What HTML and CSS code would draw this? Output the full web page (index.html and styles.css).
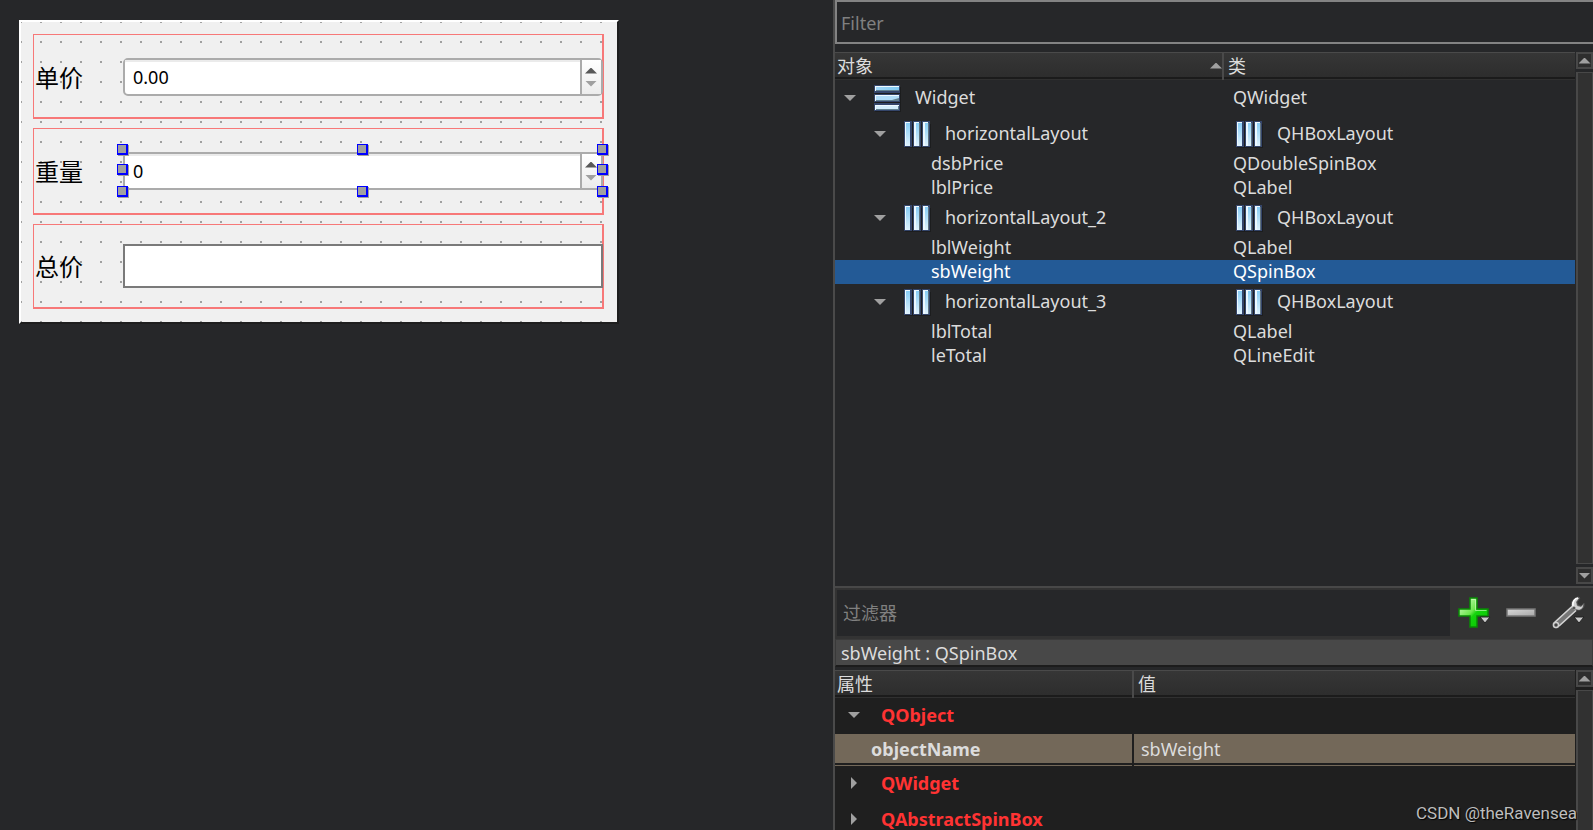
FILE: index.html
```html
<!DOCTYPE html>
<html lang="zh-CN">
<head>
<meta charset="utf-8">
<title>Widget</title>
<link rel="stylesheet" href="styles.css">
</head>
<body>
<svg class="defs" aria-hidden="true">
  <defs>
    <linearGradient id="barV" x1="0" y1="0" x2="0" y2="1"><stop offset="0" stop-color="#84ccf6"/><stop offset="1" stop-color="#dff2fd"/></linearGradient>
    <linearGradient id="barA" x1="0" y1="0" x2="1" y2="0"><stop offset="0" stop-color="#a4d8f8"/><stop offset="1" stop-color="#80caf2"/></linearGradient>
    <linearGradient id="green" x1="0" y1="0" x2="1" y2="1"><stop offset="0" stop-color="#e4ffd8"/><stop offset=".45" stop-color="#6ee84e"/><stop offset=".55" stop-color="#14d40c"/><stop offset="1" stop-color="#06c400"/></linearGradient>
    <linearGradient id="grey" x1="0" y1="0" x2="1" y2="1"><stop offset="0" stop-color="#d8d8d8"/><stop offset="1" stop-color="#a8a8a8"/></linearGradient>
    <symbol id="hbox" viewBox="0 0 28 28">
      <path d="M1 3h26v24H1z" fill="#000" opacity=".25"/>
      <path d="M0 0h8v26H0zM9 0h8v26H9zM18 0h8v26h-8z" fill="#34456a"/>
      <path d="M5 2h1v23H5zM14 2h2v23h-2zM23 2h2v23h-2z" fill="#61737f"/>
      <path d="M1 1h5v24H1zM10 1h5v24h-5zM19 1h5v24h-5z" fill="url(#barV)"/>
      <path d="M1 1h1v24H1zM10 1h2v24h-2zM19 1h2v24h-2zM1 1h5v1H1zM10 1h5v1h-5zM19 1h5v1h-5z" fill="#ecf8ff"/>
    </symbol>
    <symbol id="vbox" viewBox="0 0 28 28">
      <path d="M1 2h26v25H1z" fill="#000" opacity=".25"/>
      <path d="M0 0h26v8H0zM0 9h26v8H0zM0 18h26v8H0z" fill="#34456a"/>
      <path d="M2 2h23v4H2zM2 11h23v5H2zM2 20h23v5H2z" fill="#61808f"/>
      <path d="M1 1h24v4H1z" fill="url(#barA)"/>
      <path d="M1 10h24v3l-7 2H1z" fill="#b0dcf8"/>
      <path d="M1 20h23v4H1z" fill="#d4edfc"/>
      <path d="M1 1h24v1H1zM1 10h24v1H1zM1 20h24v1H1zM1 1h1v5H1zM1 10h1v6H1zM1 20h1v5H1z" fill="#f0faff"/>
    </symbol>
  </defs>
</svg>
<div class="app">
  <main class="canvas">
    <form class="form">
      <div class="group first">
        <label class="label" for="price">单价</label>
        <div class="spin">
          <input class="spin-input" id="price" type="text" value="0.00">
          <span class="spin-buttons">
            <button type="button" class="step" aria-label="增加"><i class="tri up dark"></i></button>
            <button type="button" class="step" aria-label="减少"><i class="tri down"></i></button>
          </span>
        </div>
      </div>
      <div class="group second">
        <label class="label" for="weight">重量</label>
        <div class="spin selected">
          <input class="spin-input" id="weight" type="text" value="0">
          <span class="spin-buttons">
            <button type="button" class="step" aria-label="增加"><i class="tri up dark"></i></button>
            <button type="button" class="step" aria-label="减少"><i class="tri down"></i></button>
          </span>
          <i class="handle top left"></i><i class="handle top center"></i><i class="handle top right"></i>
          <i class="handle middle left"></i><i class="handle middle right"></i>
          <i class="handle bottom left"></i><i class="handle bottom center"></i><i class="handle bottom right"></i>
        </div>
      </div>
      <div class="group">
        <label class="label" for="total">总价</label>
        <input class="line-edit" id="total" type="text">
      </div>
    </form>
  </main>

  <aside class="side">
    <section class="inspector">
      <input class="filter" type="text" placeholder="Filter" aria-label="Filter">
      <div class="view">
        <div class="view-body">
          <table class="grid tree">
            <colgroup><col class="col-object"><col></colgroup>
            <thead><tr><th><span class="head">对象<i class="tri up"></i></span></th><th>类</th></tr></thead>
            <tbody>
              <tr class="tall"><td><span class="cell"><i class="tri down"></i><svg class="icon"><use href="#vbox"/></svg>Widget</span></td><td><span class="cell">QWidget</span></td></tr>
              <tr class="tall"><td><span class="cell level-1"><i class="tri down"></i><svg class="icon"><use href="#hbox"/></svg>horizontalLayout</span></td><td><span class="cell"><svg class="icon"><use href="#hbox"/></svg>QHBoxLayout</span></td></tr>
              <tr><td><span class="cell level-2">dsbPrice</span></td><td><span class="cell">QDoubleSpinBox</span></td></tr>
              <tr><td><span class="cell level-2">lblPrice</span></td><td><span class="cell">QLabel</span></td></tr>
              <tr class="tall"><td><span class="cell level-1"><i class="tri down"></i><svg class="icon"><use href="#hbox"/></svg>horizontalLayout_2</span></td><td><span class="cell"><svg class="icon"><use href="#hbox"/></svg>QHBoxLayout</span></td></tr>
              <tr><td><span class="cell level-2">lblWeight</span></td><td><span class="cell">QLabel</span></td></tr>
              <tr class="current"><td><span class="cell level-2">sbWeight</span></td><td><span class="cell">QSpinBox</span></td></tr>
              <tr class="tall"><td><span class="cell level-1"><i class="tri down"></i><svg class="icon"><use href="#hbox"/></svg>horizontalLayout_3</span></td><td><span class="cell"><svg class="icon"><use href="#hbox"/></svg>QHBoxLayout</span></td></tr>
              <tr><td><span class="cell level-2">lblTotal</span></td><td><span class="cell">QLabel</span></td></tr>
              <tr><td><span class="cell level-2">leTotal</span></td><td><span class="cell">QLineEdit</span></td></tr>
            </tbody>
          </table>
        </div>
        <div class="scrollbar">
          <button type="button" class="scroll-button" aria-label="向上滚动"><i class="tri up"></i></button>
          <div class="thumb"></div>
          <button type="button" class="scroll-button" aria-label="向下滚动"><i class="tri down"></i></button>
        </div>
      </div>
    </section>

    <section class="properties">
      <div class="toolbar">
        <input class="prop-filter" type="text" placeholder="过滤器" aria-label="过滤器">
        <button type="button" class="tool" aria-label="添加">
          <svg class="tool-icon" viewBox="0 0 34 34"><path d="M12 2h7v11h11v7H19v11h-7V20H1v-7h11z" fill="url(#green)" stroke="#0a8a06" stroke-width="1.5"/><path d="M13.500 3.500h4v11h11" fill="none" stroke="#d8ffc8" opacity=".6"/><path d="M22 21h10l-5 6z" fill="#ccc" stroke="#222"/></svg>
        </button>
        <button type="button" class="tool" aria-label="移除">
          <svg class="tool-icon" viewBox="0 0 34 34"><path d="M2 13h28v7H2z" fill="url(#grey)" stroke="#777" stroke-width="1.500"/></svg>
        </button>
        <button type="button" class="tool" aria-label="配置">
          <svg class="tool-icon" viewBox="0 0 34 34"><path d="M1 27 20 10c-2-4 2-9 7-9l1 1-3 4 1 3 3 1 3-3c1 4-2 8-7 7L7 31c-3 3-8 0-6-4z" fill="#777" stroke="#4c4c4c"/><path d="M2 27 20 10.500M7 30 24 14.500" stroke="#d5d5d5" stroke-width="1.500" fill="none"/><path d="M20 11c-1-5 2-9 7-9l-3 4 1 4 4 1 2-2c0 4-4 6-7 4l-2 1z" fill="#d0d0d0"/><path d="M21 10c-1-4 2-8 5-8" stroke="#fff" stroke-width="1.500" fill="none"/><circle cx="22" cy="12" r="1.500" fill="#555"/><circle cx="4" cy="29" r="2.500" fill="#444" stroke="#d0d0d0" stroke-width="1.500"/><path d="M22 21h10l-5 6z" fill="#ccc" stroke="#222"/></svg>
        </button>
      </div>
      <div class="title">sbWeight : QSpinBox</div>
      <div class="view props">
        <div class="view-body">
          <table class="grid">
            <colgroup><col class="col-property"><col></colgroup>
            <thead><tr><th>属性</th><th>值</th></tr></thead>
            <tbody>
              <tr class="tall"><td colspan="2"><span class="category"><i class="tri down"></i>QObject</span></td></tr>
              <tr class="property"><td>objectName</td><td>sbWeight</td></tr>
              <tr class="tall"><td colspan="2"><span class="category"><i class="tri side-arrow"></i>QWidget</span></td></tr>
              <tr class="tall"><td colspan="2"><span class="category"><i class="tri side-arrow"></i>QAbstractSpinBox</span></td></tr>
            </tbody>
          </table>
        </div>
        <div class="scrollbar">
          <button type="button" class="scroll-button" aria-label="向上滚动"><i class="tri up"></i></button>
          <div class="thumb"></div>
        </div>
      </div>
    </section>
  </aside>
  <div class="watermark">CSDN @theRavensea</div>
</div>
</body>
</html>
```

FILE: styles.css
```css
* { box-sizing: border-box; }

body {
  margin: 0;
  background: #262729;
  color: #dcdcdc;
  font: 18px/24px "Noto Sans", "Noto Sans CJK SC", sans-serif;
}

input, button { font: inherit; margin: 0; border-radius: 0; }
button { padding: 0; border: 0; background: none; display: flex; align-items: center; justify-content: center; }
input { min-width: 0; outline: 0; }

.defs { position: absolute; width: 0; height: 0; }

.app {
  position: relative;
  display: grid;
  grid-template-columns: 833fr 760fr;
  height: 100vh;
  overflow: hidden;
}

/* Small arrows */
.tri { flex: none; width: 12px; height: 6px; background: #a0a0a0; }
.tri.up { clip-path: polygon(50% 0, 100% 100%, 0 100%); }
.tri.down { clip-path: polygon(0 0, 100% 0, 50% 100%); }
.tri.dark { background: #585858; }
.tri.side-arrow { width: 6px; height: 12px; margin: 0 3px; clip-path: polygon(0 0, 100% 50%, 0 100%); }

/* Form being designed */
.canvas { padding: 20px 19px; min-width: 0; }

.form {
  display: flex;
  flex-direction: column;
  gap: 9px;
  max-width: 600px;
  padding: 12px 13px 13px 12px;
  border: 2px solid #1e1e1e;
  border-top-color: #fff;
  border-left-color: #fff;
  color: #000;
  background: conic-gradient(at 2px 2px, transparent 75%, #a0a0a0 0) -1px -1px / 20px 20px #f0f0f0;
  background-clip: padding-box;
}

.group {
  display: flex;
  align-items: center;
  min-height: 85px;
  padding-left: 1px;
  border: solid #f77878;
  border-width: 1px 2px 2px 1px;
}
.group.first { padding-top: 2px; }
.group.second { min-height: 87px; }

.label { flex: none; width: 88px; padding-top: 2px; font-size: 24px; line-height: 36px; }

.spin {
  position: relative;
  display: flex;
  flex: 1;
  height: 38px;
  margin-right: -1px;
  border: 2px solid #ababab;
  border-radius: 5px;
  background: #fff;
}
.spin-input { flex: 1; padding: 0 8px 2px; border: 0; border-top: 2px solid #ebebeb; background: none; color: #000; }
.spin-buttons {
  display: flex;
  flex-direction: column;
  justify-content: center;
  width: 21px;
  padding-right: 1px;
  border-left: 2px solid #ababab;
  background: linear-gradient(#fff, #ececec);
}
.step { height: 13px; }
.line-edit { flex: 1; height: 44px; margin-right: -1px; padding: 0 8px; border: 2px solid #7a7a7a; background: #fff; color: #000; }

.handle {
  position: absolute;
  width: 11px;
  height: 11px;
  border: solid #00f;
  border-width: 1px 2px 2px 1px;
  background: #a0a0a0;
  box-shadow: 1px 1px #a0a0a0;
}
.handle.top { top: -10px; }
.handle.middle { top: 10px; }
.handle.bottom { bottom: -9px; }
.handle.left { left: -8px; }
.handle.center { left: calc(50% - 6px); }
.handle.right { right: -7px; }

/* Side panels */
.side {
  display: grid;
  grid-template-rows: 588fr 242fr;
  min-width: 0;
  min-height: 0;
  border-left: 2px solid #4a4a4a;
}
.inspector, .properties { display: flex; flex-direction: column; min-height: 0; min-width: 0; overflow: hidden; }
.inspector { border-bottom: 2px solid #484848; }

.filter {
  flex: none;
  height: 44px;
  margin-bottom: 8px;
  padding: 1px 5px 0 4px;
  border: 2px solid #838383;
  border-right: 0;
  background: #262729;
  color: #dcdcdc;
}
.filter::placeholder, .prop-filter::placeholder { color: #808080; opacity: 1; }

.view { display: flex; flex: 1; gap: 1px; min-height: 0; }
.view-body { flex: 1; min-width: 0; overflow: hidden; }
.view .scrollbar { margin-bottom: 2px; }

.grid { width: 100%; table-layout: fixed; border-collapse: separate; border-spacing: 0; }
.col-object { width: 389px; }
.col-property { width: 299px; }
.grid th {
  height: 28px;
  padding: 0 2px 2px;
  border: 0 solid #4a4a4a;
  border-top-width: 1px;
  background: linear-gradient(#363636, #2c2c2c);
  box-shadow: inset 0 -1px #303030, inset 0 -3px #1b1b1b;
  font-weight: 400;
  text-align: left;
}
.grid th:first-child { padding-right: 0; border-right-width: 2px; }
.grid th:last-child { padding-left: 4px; }
.head { display: flex; align-items: center; justify-content: space-between; }

.grid td { height: 24px; padding: 0; white-space: nowrap; }
.grid .tall td { height: 36px; }
.cell { display: flex; align-items: center; padding: 0 0 2px 9px; line-height: 22px; }
.level-1 { padding-left: 39px; }
.level-2 { padding-left: 96px; }
.icon { flex: none; width: 28px; height: 28px; margin: 4px 13px 0 0; }
.cell .tri { margin-top: 2px; }
.cell .tri + .icon { margin-left: 18px; }
td:last-child .icon { margin-left: 3px; }
.current td { background: #235a96; color: #fff; }

.scrollbar { display: flex; flex-direction: column; gap: 3px; flex: none; width: 17px; }
.scroll-button { height: 17px; border: 2px solid #484848; background: #2e2e2e; overflow: hidden; }
.thumb { flex: 1; border: 2px solid #484848; border-width: 1px 1px 1px 2px; background: #313131; }

/* Property editor */
.toolbar { display: flex; align-items: center; flex: none; padding: 2px 7px 3px 2px; background: #333; }
.prop-filter { flex: 1; height: 46px; padding: 0 6px; border: 0; background: #262729; color: #dcdcdc; }
.tool { width: 34px; height: 34px; margin-left: 13px; }
.tool:first-of-type { margin-left: 8px; }
.tool-icon { width: 34px; height: 34px; }
.title { flex: none; height: 28px; margin-bottom: 3px; padding: 1px 5px; border: 1px solid #3a3a3a; border-bottom: 2px solid #1c1c1c; background: #484848; }
.props { background: #1f1f1f; }
.category { display: flex; align-items: center; gap: 21px; padding: 0 0 2px 13px; color: #f33; font-weight: 700; }
.grid .property td { height: 32px; padding: 0 0 2px 7px; background: linear-gradient(#736859 29px, #1f1f1f 29px 31px, #736859 31px); color: #dcdcdc; }
.grid .property td:first-child { padding-left: 36px; border-right: 2px solid #1f1f1f; font-weight: 700; }
.props .scrollbar { margin-bottom: 0; }
.props .thumb { border-bottom: 0; }

.watermark {
  position: absolute;
  right: 16px;
  bottom: 5px;
  color: #bdbdbd;
  font-family: Roboto, sans-serif;
  font-size: 17px;
  text-shadow: 1px 1px 1px #000;
}
```
